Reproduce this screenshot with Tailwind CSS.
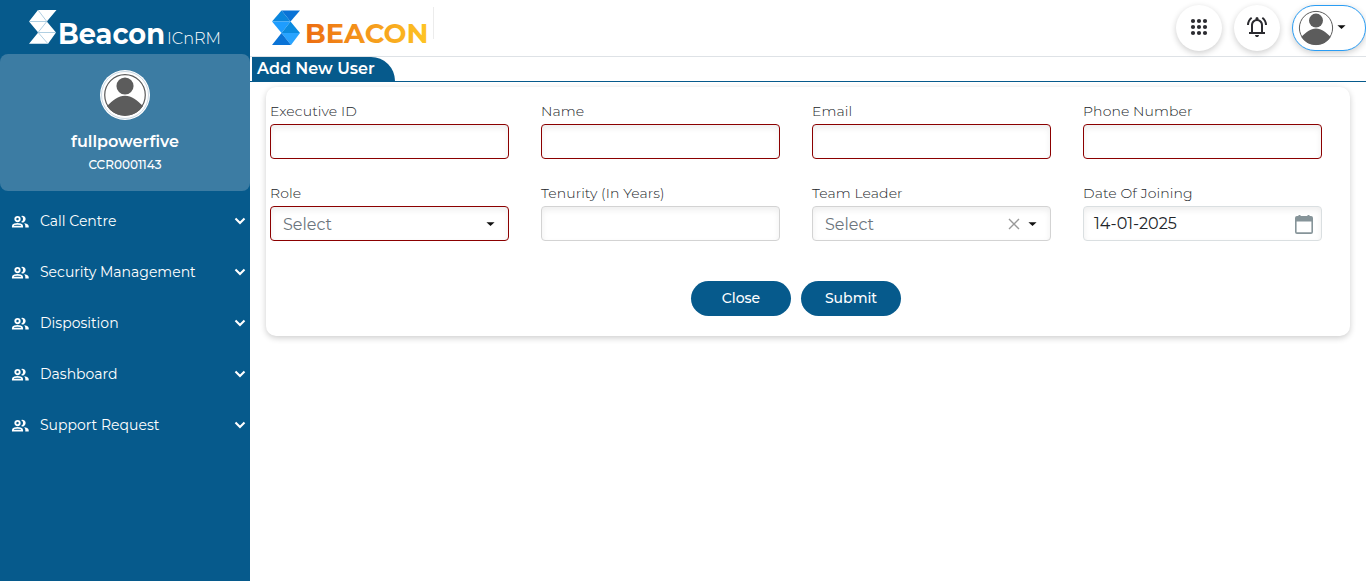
<!DOCTYPE html>
<html lang="en">
<head>
<meta charset="utf-8">
<title>Add New User</title>
<script src="https://cdn.jsdelivr.net/npm/@tailwindcss/browser@4"></script>
</head>
<body class="flex h-[581px] w-[1366px] overflow-hidden bg-white font-['Montserrat','Inter',sans-serif] text-[#212529]">
<svg class="hidden">
  <symbol id="user" viewBox="0 0 36 36">
    <circle cx="18" cy="18" r="16.6" fill="#fff" stroke="#5c5c5c" stroke-width="1"/>
    <circle cx="18" cy="10.600" r="7" fill="#5c5c5c"/>
    <path d="M3.300 27C8 22.500 12.500 18.600 18 18.600s10 3.900 14.700 8.400A16.400 16.400 0 0 1 18 34.600 16.400 16.400 0 0 1 3.300 27Z" fill="#5c5c5c"/>
  </symbol>
  <symbol id="group" viewBox="0 0 18 14">
    <path d="M6.500 1.900a2.200 2.200 0 1 0 0 4.400 2.200 2.200 0 0 0 0-4.400zM1.900 11.600v-.7c0-1.200 2.800-2 4.600-2s4.600.8 4.600 2v.7z" fill="none" stroke="#fff" stroke-width="1.900"/>
    <path fill="#fff" d="M10 7.100a3.200 3.200 0 0 0 0-6 3.300 3.300 0 1 1 0 6zM13 8.300c2.200.3 4.700 1 4.700 2.800v1.500h-3.400v-1.500c0-1.100-.5-2-1.300-2.800z"/>
  </symbol>
  <symbol id="chev" viewBox="0 0 12 8"><path d="M1.500 1.500 6 6l4.500-4.500" fill="none" stroke="#fff" stroke-width="2.100"/></symbol>
  <symbol id="caret" viewBox="0 0 10 5"><path d="M.5 0h9L5 4.300z" fill="#111"/></symbol>
</svg>

<aside class="flex w-[250px] shrink-0 flex-col bg-[#065a8c] text-white">
  <div class="h-[54px]">
    <svg width="250" height="54">
      <path d="M38 10h18.500L46.800 21.500 56 32.500 48 43.800H29l9.200-11.300L29 21.500z" fill="#fff"/>
      <path d="m38 10 8.800 11.500H29M38 32.500l8.800-11M56 32.500H38.200L48 43.800" fill="none" stroke="#9cc3da" stroke-width=".8"/>
      <text x="58" y="44" font-size="28.500" font-weight="700" textLength="107" lengthAdjust="spacingAndGlyphs" fill="#fff">Beacon</text>
      <text x="167" y="44" font-size="16.500" font-weight="300" textLength="54" lengthAdjust="spacingAndGlyphs" fill="#fff">ICnRM</text>
    </svg>
  </div>
  <div class="flex h-[137px] flex-col items-center rounded-lg bg-[#3c7ca3] pt-4">
    <div class="flex size-[50px] items-center justify-center rounded-full bg-white">
      <svg class="size-[48px] rounded-full border border-[#c9d8e4] p-[1px]"><use href="#user"/></svg>
    </div>
    <div class="mt-[10px] text-[16px] leading-6 font-semibold">fullpowerfive</div>
    <div class="mt-[2px] text-[12px] leading-[18px] font-medium">CCR0001143</div>
  </div>
  <nav class="flex flex-col pt-[5px] text-[14px]">
    <div class="flex h-[51px] items-center pr-1 pl-[11px]"><svg class="mr-[11px] h-[14px] w-[18px]"><use href="#group"/></svg><span class="flex-1">Call Centre</span><svg class="mb-px h-2 w-3"><use href="#chev"/></svg></div>
    <div class="flex h-[51px] items-center pr-1 pl-[11px]"><svg class="mr-[11px] h-[14px] w-[18px]"><use href="#group"/></svg><span class="flex-1">Security Management</span><svg class="mb-px h-2 w-3"><use href="#chev"/></svg></div>
    <div class="flex h-[51px] items-center pr-1 pl-[11px]"><svg class="mr-[11px] h-[14px] w-[18px]"><use href="#group"/></svg><span class="flex-1">Disposition</span><svg class="mb-px h-2 w-3"><use href="#chev"/></svg></div>
    <div class="flex h-[51px] items-center pr-1 pl-[11px]"><svg class="mr-[11px] h-[14px] w-[18px]"><use href="#group"/></svg><span class="flex-1">Dashboard</span><svg class="mb-px h-2 w-3"><use href="#chev"/></svg></div>
    <div class="flex h-[51px] items-center pr-1 pl-[11px]"><svg class="mr-[11px] h-[14px] w-[18px]"><use href="#group"/></svg><span class="flex-1">Support Request</span><svg class="mb-px h-2 w-3"><use href="#chev"/></svg></div>
  </nav>
</aside>

<main class="flex min-w-0 flex-1 flex-col">
  <header class="flex h-[57px] items-start border-b border-[#dee2e6]">
    <svg width="200" height="56">
      <defs><linearGradient id="gold"><stop stop-color="#ec6c12"/><stop offset="1" stop-color="#fec524"/></linearGradient></defs>
      <path d="m22 21.500 9.500-11 9 11z" fill="#0b86dc"/>
      <path d="M31.500 10.500H50l-9.500 11z" fill="#0a73d6"/>
      <path d="M22 21.500h18.500L31.500 33z" fill="#1e9dff"/>
      <path d="m40.500 21.500 9.500 11.500H31.500z" fill="#0b8be0"/>
      <path d="M31.500 33H50l-9 12z" fill="#29a4ff"/>
      <path d="m31.500 33 9.500 12H22z" fill="#0a73d6"/>
      <text x="55" y="42.500" font-size="27.500" font-weight="700" textLength="123.500" lengthAdjust="spacingAndGlyphs" fill="url(#gold)">BEACON</text>
      <path d="M183.500 7v32" stroke="#ececec"/>
    </svg>
    <div class="ml-auto flex gap-3 pt-[5px]">
      <div class="flex size-[46px] items-center justify-center rounded-full bg-white pb-0.5 shadow-[0_2px_6px_rgba(0,0,0,0.2)]">
        <svg class="size-[18px]" viewBox="0 0 18 18" fill="#2b2b30"><circle cx="3" cy="3" r="2.100"/><circle cx="9" cy="3" r="2.100"/><circle cx="15" cy="3" r="2.100"/><circle cx="3" cy="9" r="2.100"/><circle cx="9" cy="9" r="2.100"/><circle cx="15" cy="9" r="2.100"/><circle cx="3" cy="15" r="2.100"/><circle cx="9" cy="15" r="2.100"/><circle cx="15" cy="15" r="2.100"/></svg>
      </div>
      <div class="flex size-[46px] items-center justify-center rounded-full bg-white pb-0.5 shadow-[0_2px_6px_rgba(0,0,0,0.2)]">
        <svg class="size-6" viewBox="0 0 24 24" fill="#2b2b30"><path d="M4 19v-2h2v-7q0-2.075 1.250-3.687T10.500 4.200v-.7q0-.625.438-1.062T12 2t1.063.438T13.500 3.500v.7q2 .5 3.250 2.113T18 10v7h2v2zm8 3q-.825 0-1.412-.587T10 20h4q0 .825-.587 1.413T12 22m-4-5h8v-7q0-1.650-1.175-2.825T12 6 9.175 7.175 8 10zm-6-7q0-2.500 1.113-4.587T6.100 1.950L7.275 3.550q-1.475 1.100-2.375 2.775T4 10zm18 0q0-2-.9-3.675T16.725 3.550L17.900 1.950q1.875 1.375 2.988 3.463T22 10z"/></svg>
      </div>
      <div class="flex h-[46px] w-[74px] items-center rounded-full border border-[#2a9df4] bg-white pl-[5px] shadow-[0_2px_6px_rgba(0,0,0,0.2)]">
        <svg class="size-9"><use href="#user"/></svg>
        <svg class="mb-px ml-[3px] h-[5px] w-[9px]"><use href="#caret"/></svg>
      </div>
    </div>
  </header>
  <div class="flex h-[25px] border-b border-[#065a8c] pl-0.5">
    <h1 class="h-[25px] w-[143px] rounded-tr-[24px] bg-[#065a8c] pl-[5px] text-[16px] leading-[23px] font-semibold text-white">Add New User</h1>
  </div>
  <section class="mt-[5px] ml-4 h-[249px] w-[1084px] rounded-[10px] bg-white px-1 pt-3.5 shadow-[0_2px_6px_rgba(0,0,0,0.2)]">
    <div class="grid grid-cols-[repeat(4,239px)] gap-x-8 gap-y-[24px] text-[14px]">
      <div><label class="block h-[23px] leading-[21px] font-light tracking-[0.1px]">Executive ID</label><div class="h-[35px] rounded border border-[#8b0000] shadow-[inset_0_3px_6px_rgba(0,0,0,0.07)]"></div></div>
      <div><label class="block h-[23px] leading-[21px] font-light tracking-[0.1px]">Name</label><div class="h-[35px] rounded border border-[#8b0000] shadow-[inset_0_3px_6px_rgba(0,0,0,0.07)]"></div></div>
      <div><label class="block h-[23px] leading-[21px] font-light tracking-[0.1px]">Email</label><div class="h-[35px] rounded border border-[#8b0000] shadow-[inset_0_3px_6px_rgba(0,0,0,0.07)]"></div></div>
      <div><label class="block h-[23px] leading-[21px] font-light tracking-[0.1px]">Phone Number</label><div class="h-[35px] rounded border border-[#8b0000] shadow-[inset_0_3px_6px_rgba(0,0,0,0.07)]"></div></div>
      <div><label class="block h-[23px] leading-[21px] font-light tracking-[0.1px]">Role</label><div class="flex h-[35px] items-center rounded border border-[#8b0000] pr-[13px] pl-3 shadow-[inset_0_3px_6px_rgba(0,0,0,0.07)]"><span class="flex-1 pt-0.5 text-[16px] text-[#6c757d]">Select</span><svg class="mt-px h-[5px] w-[9px]"><use href="#caret"/></svg></div></div>
      <div><label class="block h-[23px] leading-[21px] font-light tracking-[0.1px]">Tenurity (In Years)</label><div class="h-[35px] rounded border border-[#d3d3d3] shadow-[inset_0_3px_6px_rgba(0,0,0,0.07)]"></div></div>
      <div><label class="block h-[23px] leading-[21px] font-light tracking-[0.1px]">Team Leader</label><div class="flex h-[35px] items-center rounded border border-[#d3d3d3] pr-[13px] pl-3 shadow-[inset_0_3px_6px_rgba(0,0,0,0.07)]"><span class="flex-1 pt-0.5 text-[16px] text-[#6c757d]">Select</span><svg class="mr-2 size-3" viewBox="0 0 12 12"><path d="m1 1 10 10M11 1 1 11" stroke="#999" stroke-width="1.400"/></svg><svg class="mt-px h-[5px] w-[9px]"><use href="#caret"/></svg></div></div>
      <div><label class="block h-[23px] leading-[21px] font-light tracking-[0.1px]">Date Of Joining</label><div class="flex h-[35px] items-center rounded border border-[#dadfe1] pr-2 pl-2.5 shadow-[inset_0_3px_6px_rgba(0,0,0,0.07)]"><span class="flex-1 text-[16px]">14-01-2025</span><svg class="mt-0.5 h-[19px] w-[18px]" viewBox="0 0 18 19"><path d="M2 1h1.500V0h2v1h7V0h2v1H16a2 2 0 0 1 2 2v14a2 2 0 0 1-2 2H2a2 2 0 0 1-2-2V3a2 2 0 0 1 2-2zm-.4 5.500v10.800h14.800V6.500z" fill="#869499"/></svg></div></div>
    </div>
    <div class="mt-10 flex justify-center gap-2.5 pr-6 text-[14px] font-medium text-white">
      <button class="h-[35px] w-[100px] rounded-full bg-[#065a8c]">Close</button>
      <button class="h-[35px] w-[100px] rounded-full bg-[#065a8c]">Submit</button>
    </div>
  </section>
</main>
</body>
</html>
